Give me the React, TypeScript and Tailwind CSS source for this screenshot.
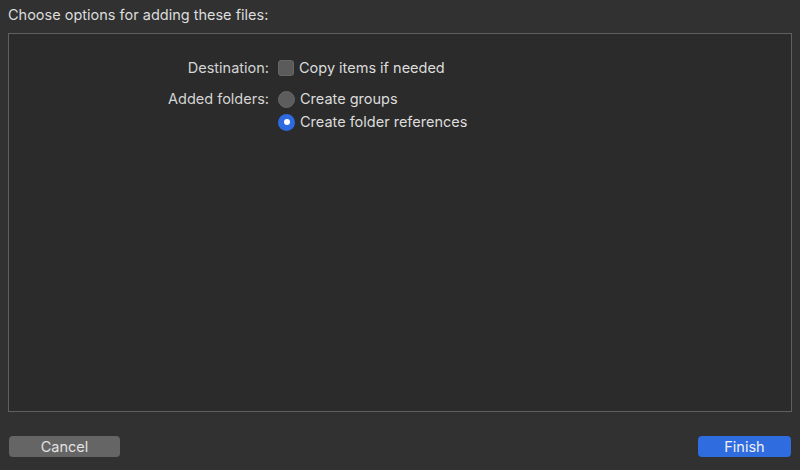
import React, { useState } from 'react';

const FONT = { fontFamily: '"Inter", "Liberation Sans", Arial, sans-serif' };

function Radio({ checked, onClick }: { checked: boolean; onClick: () => void }) {
  return (
    <button
      onClick={onClick}
      className={`w-[17px] h-[17px] rounded-full flex items-center justify-center shrink-0 ${
        checked ? 'bg-[#2e6ae0]' : 'bg-[#5d5d5d] border border-[#666666]'
      }`}
    >
      {checked && <span className="w-[6px] h-[6px] rounded-full bg-white" />}
    </button>
  );
}

export default function App() {
  const [copy, setCopy] = useState(false);
  const [mode, setMode] = useState<'groups' | 'refs'>('refs');

  return (
    <div className="w-[800px] h-[470px] bg-[#313131] flex flex-col text-[#dcdcdc] overflow-hidden" style={FONT}>
      {/* Title */}
      <div className="h-[33px] px-[8px] pt-[6px] text-[14.5px] leading-[18px]">
        Choose options for adding these files:
      </div>

      {/* Options panel */}
      <div className="mx-[8px] h-[379px] border border-[#5f5f5f] bg-[#2b2b2b] pt-[24px]">
        <div className="flex items-center h-[20px]">
          <div className="w-[260px] text-right text-[14.5px] text-[#d4d4d4]">Destination:</div>
          <button
            onClick={() => setCopy(!copy)}
            className="ml-[9px] w-[16px] h-[16px] rounded-[3px] bg-[#5b5b5b] border border-[#666666] shrink-0 flex items-center justify-center"
          >
            {copy && (
              <svg width="11" height="11" viewBox="0 0 12 12">
                <path d="M2 6.5 L5 9.5 L10 2.5" stroke="white" strokeWidth="2" fill="none" />
              </svg>
            )}
          </button>
          <span className="ml-[5px] text-[14.5px]">Copy items if needed</span>
        </div>

        <div className="flex items-center h-[20px] mt-[11px]">
          <div className="w-[260px] text-right text-[14.5px] text-[#d4d4d4]">Added folders:</div>
          <div className="ml-[9px]">
            <Radio checked={mode === 'groups'} onClick={() => setMode('groups')} />
          </div>
          <span className="ml-[5px] text-[14.5px]">Create groups</span>
        </div>

        <div className="flex items-center h-[20px] mt-[3px]">
          <div className="w-[260px]" />
          <div className="ml-[9px]">
            <Radio checked={mode === 'refs'} onClick={() => setMode('refs')} />
          </div>
          <span className="ml-[5px] text-[14.5px]">Create folder references</span>
        </div>
      </div>

      {/* Buttons */}
      <div className="flex justify-between px-[9px] mt-[24px]">
        <button className="w-[111px] h-[21px] rounded-[4px] bg-[#656565] text-[14.5px] text-[#e2e2e2] leading-[21px]">
          Cancel
        </button>
        <button className="w-[93px] h-[21px] rounded-[4px] bg-[#2f6ce0] text-[14.5px] text-[#f0f0f0] leading-[21px]">
          Finish
        </button>
      </div>
    </div>
  );
}
